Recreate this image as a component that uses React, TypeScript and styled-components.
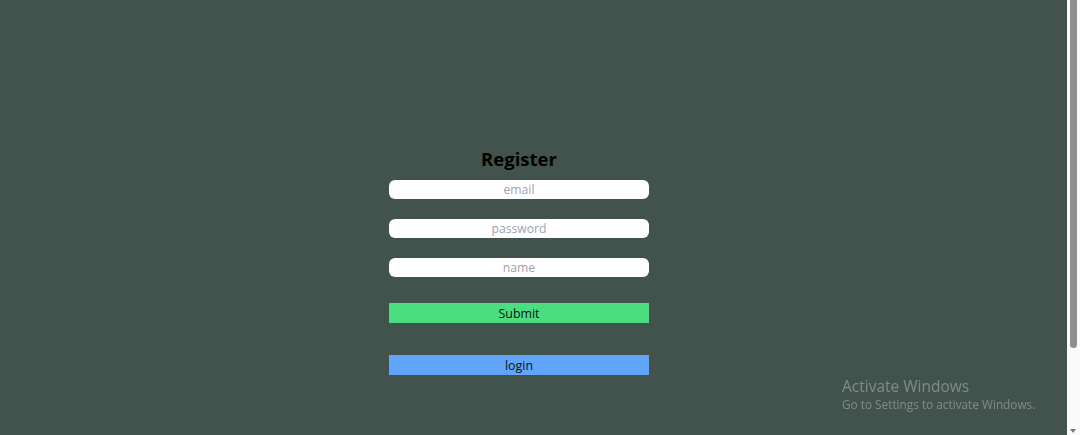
import React from "react";
import styled, { createGlobalStyle } from "styled-components";

const Global = createGlobalStyle`
  html, body { margin: 0; padding: 0; }
  body {
    background: #41534c;
    font-family: "Open Sans", "Noto Sans", sans-serif;
  }
`;

const Page = styled.div`
  display: flex;
  justify-content: center;
  padding: 146px 42px 0 0;
  box-sizing: border-box;
`;

const Form = styled.form`
  width: 260px;
  display: flex;
  flex-direction: column;
`;

const Title = styled.h1`
  margin: 0 0 8px;
  text-align: center;
  font-size: 18.5px;
  font-weight: 700;
  line-height: 26px;
  color: #000;
`;

const Input = styled.input`
  height: 19px;
  box-sizing: border-box;
  border: none;
  border-radius: 6px;
  background: #fff;
  text-align: center;
  font-family: inherit;
  font-size: 12.2px;
  padding: 0;
  margin-bottom: 20px;
  outline: none;
  &::placeholder { color: #9ca3af; }
`;

const Button = styled.button<{ $bg: string; $mt: number }>`
  height: 20px;
  margin-top: ${(p) => p.$mt}px;
  border: none;
  background: ${(p) => p.$bg};
  font-family: inherit;
  font-size: 12.4px;
  color: #111;
  padding: 0;
  cursor: pointer;
`;

const Watermark = styled.div`
  position: fixed;
  left: 842px;
  top: 376px;
  color: rgba(255, 255, 255, 0.32);
  font-family: "Open Sans", "Noto Sans", sans-serif;
`;

const WmTitle = styled.div`
  font-size: 15.5px;
  line-height: 20px;
`;

const WmSub = styled.div`
  font-size: 11.8px;
  line-height: 17px;
`;

const ScrollTrack = styled.div`
  position: fixed;
  top: 0;
  right: 0;
  width: 13px;
  height: 100%;
  background: #fafafa;
`;

const ScrollThumb = styled.div`
  position: absolute;
  top: 0;
  left: 3px;
  width: 7px;
  height: 348px;
  background: #8e8e8e;
  border-radius: 0 0 4px 4px;
`;

const ScrollArrow = styled.div`
  position: absolute;
  bottom: 2px;
  left: 3px;
  width: 0;
  height: 0;
  border-left: 3.5px solid transparent;
  border-right: 3.5px solid transparent;
  border-top: 4px solid #777;
`;

export default function App() {
  return (
    <>
      <Global />
      <Page>
        <Form onSubmit={(e) => e.preventDefault()}>
          <Title>Register</Title>
          <Input placeholder="email" />
          <Input placeholder="password" type="password" />
          <Input placeholder="name" />
          <Button type="submit" $bg="#4ade80" $mt={6}>Submit</Button>
          <Button type="button" $bg="#60a5fa" $mt={32}>login</Button>
        </Form>
      </Page>
      <Watermark>
        <WmTitle>Activate Windows</WmTitle>
        <WmSub>Go to Settings to activate Windows.</WmSub>
      </Watermark>
      <ScrollTrack>
        <ScrollThumb />
        <ScrollArrow />
      </ScrollTrack>
    </>
  );
}
